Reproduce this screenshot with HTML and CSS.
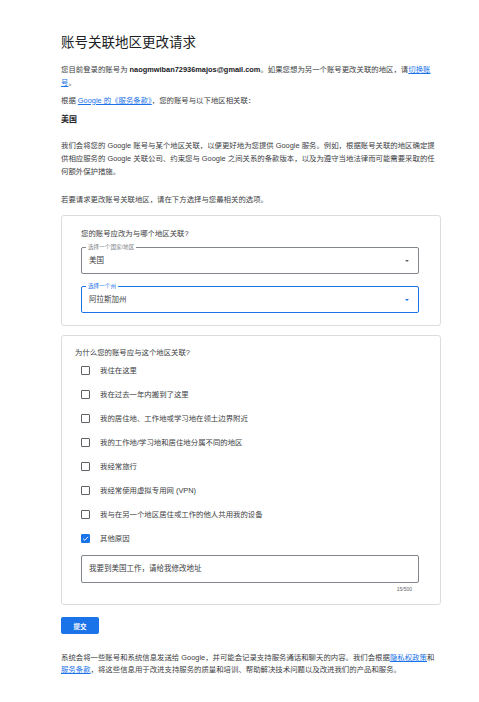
FILE: index.html
```html
<!DOCTYPE html>
<html lang="zh-CN">
<head>
<meta charset="utf-8">
<title>账号关联地区更改请求</title>
<link rel="stylesheet" href="styles.css">
</head>
<body>
<main class="page">
  <h1 class="title">账号关联地区更改请求</h1>
  <p class="p1">您目前登录的账号为 <b class="email">naogmwiban72936majos@gmail.com</b>。如果您想为另一个账号更改关联的地区，请<a href="#" class="link">切换账号</a>。</p>
  <p class="p2">根据 <a href="#" class="link">Google 的《服务条款》</a>，您的账号与以下地区相关联：</p>
  <p class="country">美国</p>
  <p class="para">我们会将您的 Google 账号与某个地区关联，以便更好地为您提供 Google 服务。例如，根据账号关联的地区确定提供相应服务的 Google 关联公司、约束您与 Google 之间关系的条款版本，以及为遵守当地法律而可能需要采取的任何额外保护措施。</p>
  <p class="para2">若要请求更改账号关联地区，请在下方选择与您最相关的选项。</p>

  <section class="card card-region">
    <p class="card-q">您的账号应改为与哪个地区关联?</p>
    <div class="select">
      <span class="float-label">选择一个国家/地区</span>
      <span class="select-value">美国</span>
      <span class="arrow"></span>
    </div>
    <div class="select select-active">
      <span class="float-label">选择一个州</span>
      <span class="select-value">阿拉斯加州</span>
      <span class="arrow"></span>
    </div>
  </section>

  <section class="card card-reason">
    <p class="card-q2">为什么您的账号应与这个地区关联?</p>
    <div class="row"><span class="box"></span><span>我住在这里</span></div>
    <div class="row"><span class="box"></span><span>我在过去一年内搬到了这里</span></div>
    <div class="row"><span class="box"></span><span>我的居住地、工作地或学习地在领土边界附近</span></div>
    <div class="row"><span class="box"></span><span>我的工作地/学习地和居住地分属不同的地区</span></div>
    <div class="row"><span class="box"></span><span>我经常旅行</span></div>
    <div class="row"><span class="box"></span><span>我经常使用虚拟专用网 (VPN)</span></div>
    <div class="row"><span class="box"></span><span>我与在另一个地区居住或工作的他人共用我的设备</span></div>
    <div class="row"><span class="box box-checked"><svg viewBox="0 0 10 10" width="7" height="7"><path d="M1.5 5.2 L4 7.5 L8.6 2.6" fill="none" stroke="#fff" stroke-width="1.3"/></svg></span><span>其他原因</span></div>
    <div class="textarea">我要到美国工作，请给我修改地址</div>
    <div class="counter">15/500</div>
  </section>

  <button class="submit" type="button">提交</button>

  <p class="footer">系统会将一些账号和系统信息发送给 Google，并可能会记录支持服务通话和聊天的内容。我们会根据<a href="#" class="link">隐私权政策</a>和<a href="#" class="link">服务条款</a>，将这些信息用于改进支持服务的质量和培训、帮助解决技术问题以及改进我们的产品和服务。</p>
</main>
</body>
</html>
```

FILE: styles.css
```css
* { box-sizing: border-box; }
html, body { margin: 0; padding: 0; background: #fff; }
body {
  font-family: "Liberation Sans", Arial, "Noto Sans CJK SC", sans-serif;
  color: #3c4043;
  font-size: 7.4px;
  line-height: 13px;
}
.page {
  width: 379px;
  margin-left: 61px;
  padding-top: 34px;
}
p { margin: 0; }
.title {
  margin: 0;
  font-size: 13.5px;
  line-height: 18px;
  font-weight: normal;
  color: #202124;
}
.p1 { margin-top: 11px; }
.email { color: #202124; font-weight: bold; }
.link { color: #1a73e8; text-decoration: underline; }
.p2 { margin-top: 4.5px; }
.country {
  margin-top: 6.5px;
  font-weight: bold;
  font-size: 8px;
  color: #202124;
}
.para { margin-top: 12.5px; }
.para2 { margin-top: 15px; }

.card {
  width: 380px;
  border: 1px solid #dadce0;
  border-radius: 3px;
  background: #fff;
}
.card-region {
  margin-top: 9px;
  padding: 11px 21px 12px 19px;
}
.card-q { line-height: 13px; margin-bottom: 7px; }
.select {
  position: relative;
  height: 27px;
  border: 1px solid #80868b;
  border-radius: 2px;
  display: flex;
  align-items: center;
  padding-left: 7px;
}
.select + .select { margin-top: 12px; }
.select-active { border-color: #1a73e8; }
.select-value { font-size: 7.5px; color: #3c4043; }
.float-label {
  position: absolute;
  left: 4px;
  top: -4.5px;
  padding: 0 2px;
  background: #fff;
  font-size: 5.6px;
  line-height: 8px;
  color: #80868b;
}
.select-active .float-label { color: #1a73e8; }
.arrow {
  position: absolute;
  right: 9px;
  top: 12px;
  width: 0;
  height: 0;
  border-left: 2.5px solid transparent;
  border-right: 2.5px solid transparent;
  border-top: 2.5px solid #5f6368;
}
.select-active .arrow { border-top-color: #1a73e8; }

.card-reason {
  margin-top: 9px;
  padding: 11px 21px 11px 13px;
}
.card-q2 { line-height: 12px; }
.row {
  height: 24px;
  display: flex;
  align-items: center;
  padding-left: 6px;
  gap: 10px;
  color: #3c4043;
}
.box {
  width: 9px;
  height: 9px;
  border: 1.2px solid #5f6368;
  border-radius: 1px;
  flex: none;
  display: flex;
  align-items: center;
  justify-content: center;
}
.box-checked {
  background: #1a73e8;
  border-color: #1a73e8;
}
.textarea {
  margin: 4px 0 0 6px;
  height: 28px;
  border: 1px solid #80868b;
  border-radius: 2px;
  display: flex;
  align-items: center;
  padding-left: 7px;
  font-size: 7.5px;
  color: #3c4043;
}
.counter {
  text-align: right;
  padding-right: 7px;
  font-size: 5px;
  line-height: 8px;
  margin-top: 2px;
  color: #5f6368;
}

.submit {
  display: block;
  margin-top: 12.5px;
  width: 38px;
  height: 17px;
  border: none;
  border-radius: 2px;
  background: #1a73e8;
  color: #fff;
  font-family: inherit;
  font-size: 6.5px;
  font-weight: bold;
  padding: 0;
}
.footer {
  margin-top: 17.5px;
  line-height: 12.5px;
}
```
